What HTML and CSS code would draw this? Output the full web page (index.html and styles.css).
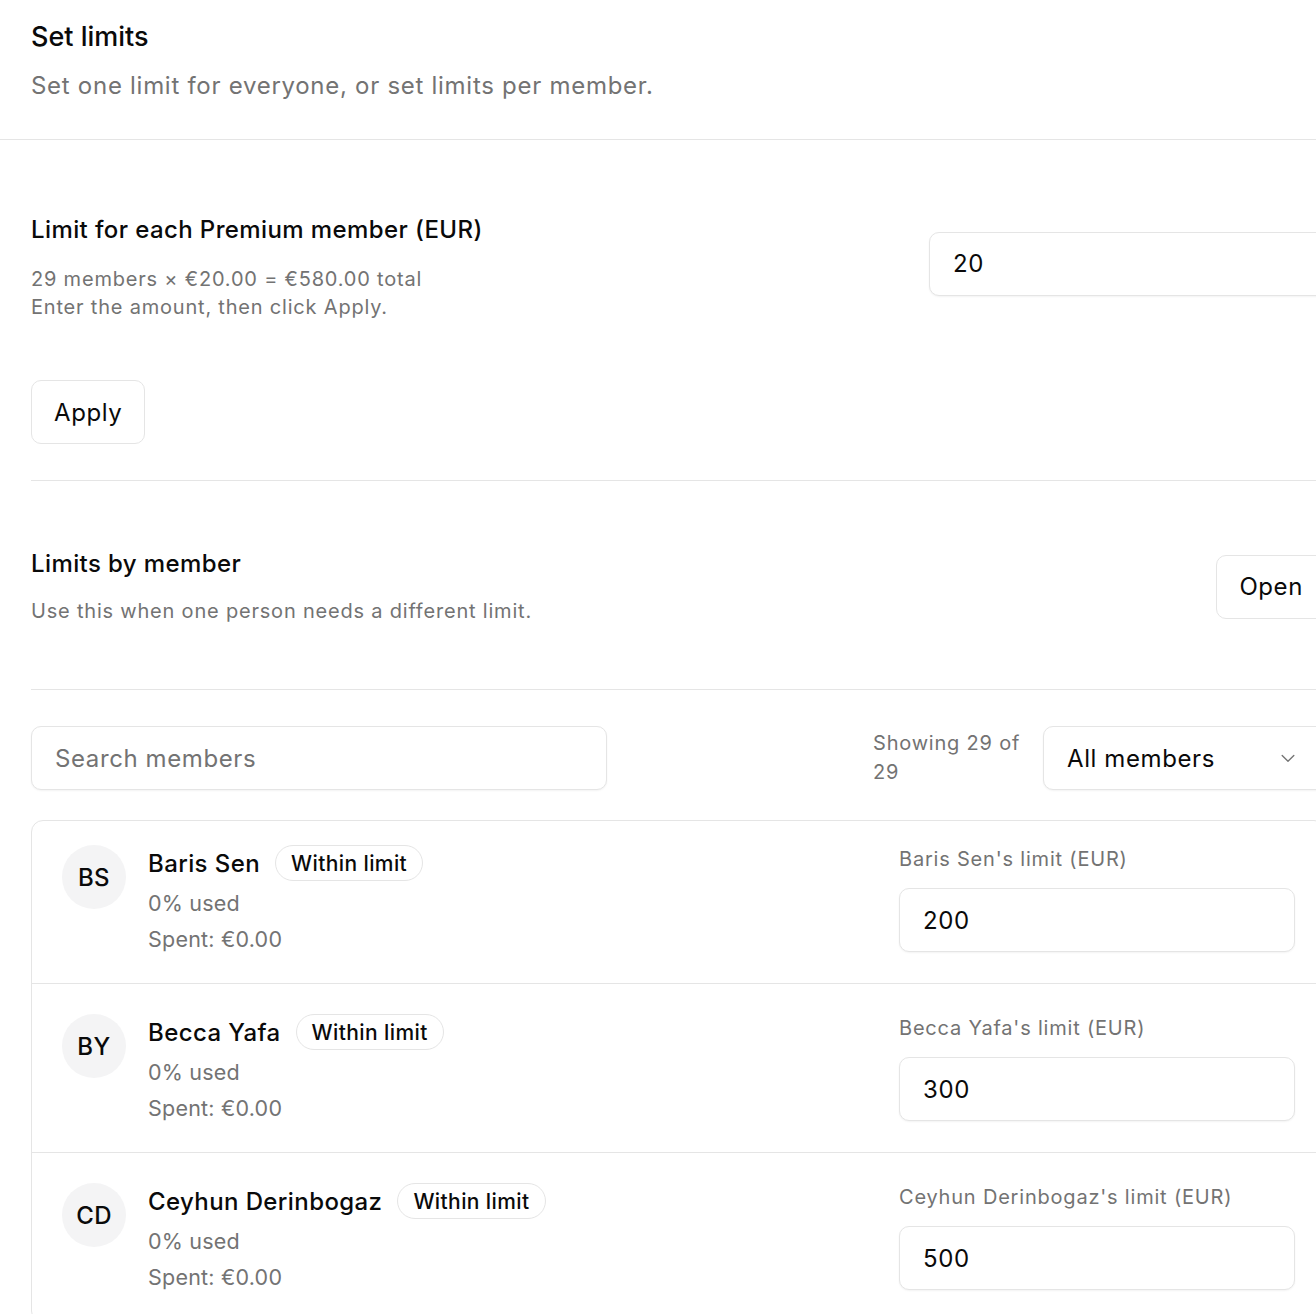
FILE: index.html
```html
<!DOCTYPE html>
<html lang="en">
<head>
  <meta charset="UTF-8">
  <title>Set limits</title>
  <link rel="stylesheet" href="styles.css">
</head>
<body>
  <div class="page">
    <header class="page-header">
      <h1>Set limits</h1>
      <p class="muted lead">Set one limit for everyone, or set limits per member.</p>
    </header>

    <div class="content">
      <section class="block block-all">
        <div class="row">
          <div class="row-text">
            <h2>Limit for each Premium member (EUR)</h2>
            <p class="muted hint">29 members × €20.00 = €580.00 total<br>Enter the amount, then click Apply.</p>
          </div>
          <input class="field field-wide" type="text" value="20">
        </div>
        <button class="btn btn-apply">Apply</button>
      </section>

      <section class="block block-members">
        <div class="row">
          <div class="row-text">
            <h2>Limits by member</h2>
            <p class="muted hint sub">Use this when one person needs a different limit.</p>
          </div>
          <button class="btn">Open</button>
        </div>
      </section>

      <div class="toolbar">
        <input class="field search" type="text" placeholder="Search members">
        <div class="toolbar-right">
          <span class="muted count">Showing 29 of 29</span>
          <div class="field select">
            <span>All members</span>
            <svg width="20" height="20" viewBox="0 0 24 24" fill="none" stroke="#737373" stroke-width="1.6" stroke-linecap="round" stroke-linejoin="round"><path d="M5 9l7 7 7-7"/></svg>
          </div>
        </div>
      </div>

      <div class="member-list">
        <div class="member">
          <div class="member-info">
            <div class="avatar">BS</div>
            <div>
              <div class="member-name">Baris Sen <span class="badge">Within limit</span></div>
              <div class="muted stat">0% used</div>
              <div class="muted stat">Spent: €0.00</div>
            </div>
          </div>
          <div class="member-limit">
            <label class="muted">Baris Sen's limit (EUR)</label>
            <input class="field" type="text" value="200">
          </div>
        </div>
        <div class="member">
          <div class="member-info">
            <div class="avatar">BY</div>
            <div>
              <div class="member-name">Becca Yafa <span class="badge">Within limit</span></div>
              <div class="muted stat">0% used</div>
              <div class="muted stat">Spent: €0.00</div>
            </div>
          </div>
          <div class="member-limit">
            <label class="muted">Becca Yafa's limit (EUR)</label>
            <input class="field" type="text" value="300">
          </div>
        </div>
        <div class="member">
          <div class="member-info">
            <div class="avatar">CD</div>
            <div>
              <div class="member-name">Ceyhun Derinbogaz <span class="badge">Within limit</span></div>
              <div class="muted stat">0% used</div>
              <div class="muted stat">Spent: €0.00</div>
            </div>
          </div>
          <div class="member-limit">
            <label class="muted">Ceyhun Derinbogaz's limit (EUR)</label>
            <input class="field" type="text" value="500">
          </div>
        </div>
      </div>
    </div>
  </div>
</body>
</html>
```

FILE: styles.css
```css
html, body {
  overflow: hidden;
}
body {
  margin: 0;
  font-family: Inter, 'Noto Sans', sans-serif;
  color: #0a0a0a;
  background: #fff;
  letter-spacing: 0.025em;
}
.page {
  width: 1357px;
}
.muted {
  color: #737373;
}
h1, h2, p {
  margin: 0;
}

.page-header {
  padding: 19px 31px 37px;
  border-bottom: 1px solid #e5e5e5;
}
h1 {
  font-size: 27px;
  font-weight: 500;
  line-height: 36px;
  letter-spacing: 0;
}
.lead {
  margin-top: 15px;
  font-size: 24px;
  line-height: 32px;
  letter-spacing: 0.03em;
}

.content {
  padding: 0 31px;
}
.block {
  border-bottom: 1px solid #e5e5e5;
}
.block-all {
  padding: 74px 0 36px;
}
.block-members {
  padding: 67px 0 64px;
}
.row {
  display: flex;
  align-items: center;
  justify-content: space-between;
}
h2 {
  font-size: 24px;
  font-weight: 500;
  line-height: 32px;
}
.hint {
  margin-top: 19px;
  font-size: 20px;
  line-height: 28px;
  letter-spacing: 0.04em;
}
.hint.sub {
  margin-top: 17px;
}

.field {
  box-sizing: border-box;
  height: 64px;
  padding: 0 23px;
  font-family: inherit;
  font-size: 24px;
  letter-spacing: 0.025em;
  color: #0a0a0a;
  background: #fff;
  border: 1px solid #e5e5e5;
  border-radius: 10px;
  box-shadow: 0 1px 2px rgba(0,0,0,0.05);
  outline: none;
}
.field::placeholder {
  color: #737373;
}
.field-wide {
  width: 397px;
  margin-bottom: 8px;
}
.btn {
  height: 64px;
  padding: 0 22px;
  font-family: inherit;
  font-size: 24px;
  letter-spacing: 0.025em;
  color: #0a0a0a;
  background: #fff;
  border: 1px solid #e5e5e5;
  border-radius: 10px;
  cursor: pointer;
}
.btn-apply {
  margin-top: 59px;
}

.toolbar {
  display: flex;
  justify-content: space-between;
  align-items: center;
  padding: 36px 0 30px;
}
.search {
  width: 576px;
}
.toolbar-right {
  display: flex;
  align-items: center;
  gap: 22px;
}
.count {
  width: 148px;
  font-size: 20px;
  line-height: 29px;
  letter-spacing: 0.04em;
}
.select {
  width: 283px;
  display: flex;
  align-items: center;
  justify-content: space-between;
  padding-right: 27px;
}

.member-list {
  border: 1px solid #e5e5e5;
  border-radius: 12px;
}
.member {
  display: flex;
  justify-content: space-between;
  align-items: flex-start;
  padding: 30px 30px 26px;
  border-bottom: 1px solid #e5e5e5;
}
.member:first-child {
  padding-top: 24px;
}
.member-info {
  display: flex;
  gap: 22px;
}
.avatar {
  width: 64px;
  height: 64px;
  border-radius: 50%;
  background: #f4f4f5;
  display: flex;
  align-items: center;
  justify-content: center;
  font-size: 24px;
  font-weight: 500;
}
.member-name {
  display: flex;
  align-items: center;
  gap: 15px;
  height: 36px;
  font-size: 24px;
  font-weight: 500;
}
.badge {
  height: 36px;
  box-sizing: border-box;
  display: inline-flex;
  align-items: center;
  padding: 0 15px;
  font-size: 21px;
  font-weight: 500;
  border: 1px solid #e5e5e5;
  border-radius: 999px;
}
.stat {
  font-size: 21.5px;
  line-height: 36px;
  letter-spacing: 0.01em;
}
.member-name + .stat {
  margin-top: 4px;
}
.member-limit {
  width: 396px;
  display: flex;
  flex-direction: column;
}
.member-limit label {
  font-size: 20px;
  line-height: 28px;
  margin-bottom: 15px;
  letter-spacing: 0.04em;
}
```
